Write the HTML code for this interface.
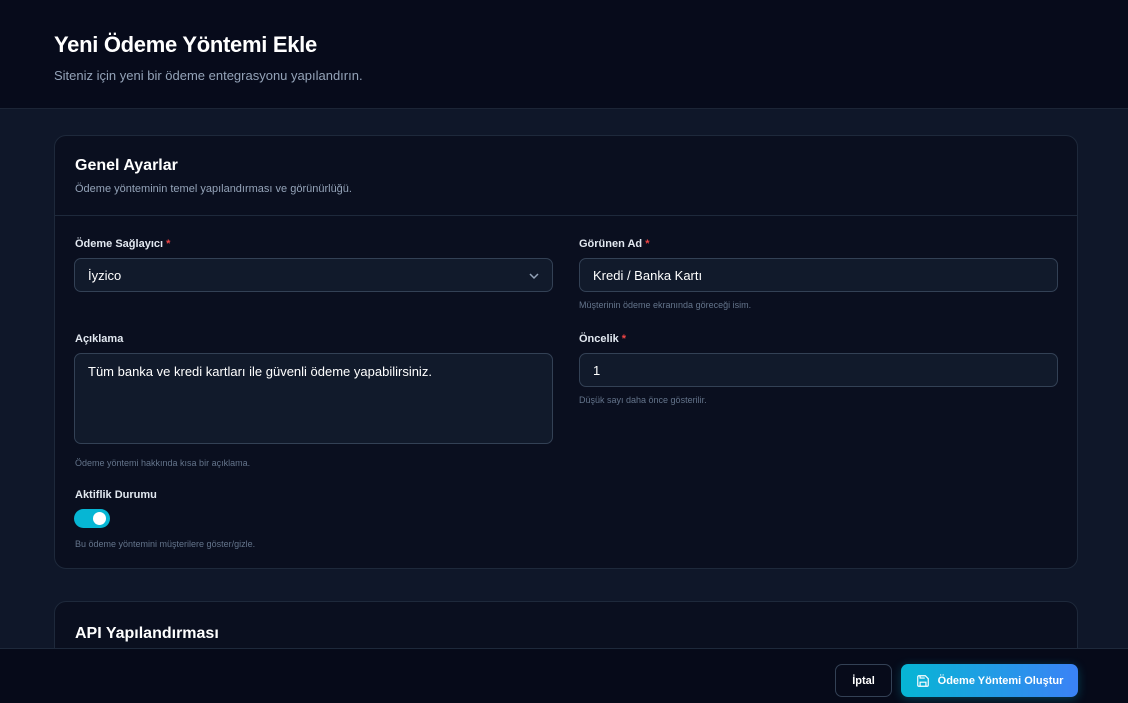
<!DOCTYPE html>
<html><head><meta charset="utf-8"><style>
*{box-sizing:border-box;margin:0;padding:0}
html,body{width:1128px;height:703px;overflow:hidden}
body{background:#0f1729;font-family:"Liberation Sans",sans-serif;color:#e5e7eb;position:relative}
.hdr{height:109px;background:#070b1b;border-bottom:1px solid #1c2536;padding:32px 0 0 54px}
.hdr h1{font-size:22px;font-weight:700;color:#fff;letter-spacing:-0.3px}
.hdr p{font-size:13px;color:#94a3b8;margin-top:10px}
.card{position:absolute;left:54px;width:1024px;background:#0a0f1f;border:1px solid #1e293b;border-radius:12px}
.c1{top:135px;height:434px}
.c2{top:601px;height:60px;overflow:hidden}
.ch{padding:21px 20px 0;height:80px;border-bottom:1px solid #1e293b}
.ch h2{font-size:16px;font-weight:700;color:#fff}
.ch p{font-size:11px;color:#94a3b8;margin-top:8px}
.lbl{position:absolute;font-size:11px;font-weight:700;color:#e2e8f0}
.lbl b{color:#ef4444}
.in{position:absolute;background:#111a2b;border:1px solid #334155;border-radius:7px;font-size:13px;color:#fff;padding:0 13px;display:flex;align-items:center}
.hint{position:absolute;font-size:9px;color:#64748b}
.foot{position:absolute;left:0;top:648px;width:1128px;height:55px;background:#060a19;border-top:1px solid #1e293b}
.btn{position:absolute;top:15px;height:33px;border-radius:7px;font-size:11px;font-weight:700;color:#fff;display:flex;align-items:center;justify-content:center}
</style></head><body>
<div class="hdr"><h1>Yeni Ödeme Yöntemi Ekle</h1><p>Siteniz için yeni bir ödeme entegrasyonu yapılandırın.</p></div>
<div class="card c1">
<div class="ch"><h2>Genel Ayarlar</h2><p>Ödeme yönteminin temel yapılandırması ve görünürlüğü.</p></div>
<div class="lbl" style="left:20px;top:102px">Ödeme Sağlayıcı <b>*</b></div>
<div class="in" style="left:19px;top:122px;width:479px;height:34px">İyzico
<svg style="position:absolute;right:12px;top:12px" width="12" height="10" viewBox="0 0 12 10"><path d="M2 3l4 4 4-4" stroke="#94a3b8" stroke-width="1.5" fill="none"/></svg></div>
<div class="lbl" style="left:524px;top:102px">Görünen Ad <b>*</b></div>
<div class="in" style="left:524px;top:122px;width:479px;height:34px">Kredi / Banka Kartı</div>
<div class="hint" style="left:524px;top:164px">Müşterinin ödeme ekranında göreceği isim.</div>
<div class="lbl" style="left:20px;top:197px">Açıklama</div>
<div class="in" style="left:19px;top:217px;width:479px;height:91px;align-items:flex-start;padding-top:10px">Tüm banka ve kredi kartları ile güvenli ödeme yapabilirsiniz.</div>
<div class="hint" style="left:20px;top:322px">Ödeme yöntemi hakkında kısa bir açıklama.</div>
<div class="lbl" style="left:524px;top:197px">Öncelik <b>*</b></div>
<div class="in" style="left:524px;top:217px;width:479px;height:34px">1</div>
<div class="hint" style="left:524px;top:259px">Düşük sayı daha önce gösterilir.</div>
<div class="lbl" style="left:20px;top:353px">Aktiflik Durumu</div>
<div style="position:absolute;left:19px;top:373px;width:36px;height:19px;border-radius:10px;background:#06b6d4"><div style="position:absolute;right:4px;top:3px;width:13px;height:13px;border-radius:50%;background:#fff"></div></div>
<div class="hint" style="left:20px;top:403px">Bu ödeme yöntemini müşterilere göster/gizle.</div>
</div>
<div class="card c2"><div style="padding:23px 20px"><h2 style="font-size:16px;font-weight:700;color:#fff">API Yapılandırması</h2></div></div>
<div class="foot">
<div class="btn" style="left:835px;width:57px;border:1px solid #334155;background:#070b1a">İptal</div>
<div class="btn" style="left:901px;width:177px;background:linear-gradient(90deg,#06b6d4,#3b82f6);box-shadow:0 2px 10px rgba(6,182,212,.3)">
<svg width="14" height="14" viewBox="0 0 24 24" fill="none" stroke="#fff" stroke-width="2" style="margin-right:8px"><path d="M5 3h11l5 5v11a2 2 0 0 1-2 2H5a2 2 0 0 1-2-2V5a2 2 0 0 1 2-2z"/><path d="M7 21v-7h10v7M7 3v4h8"/></svg>Ödeme Yöntemi Oluştur</div>
</div>
</body></html>
